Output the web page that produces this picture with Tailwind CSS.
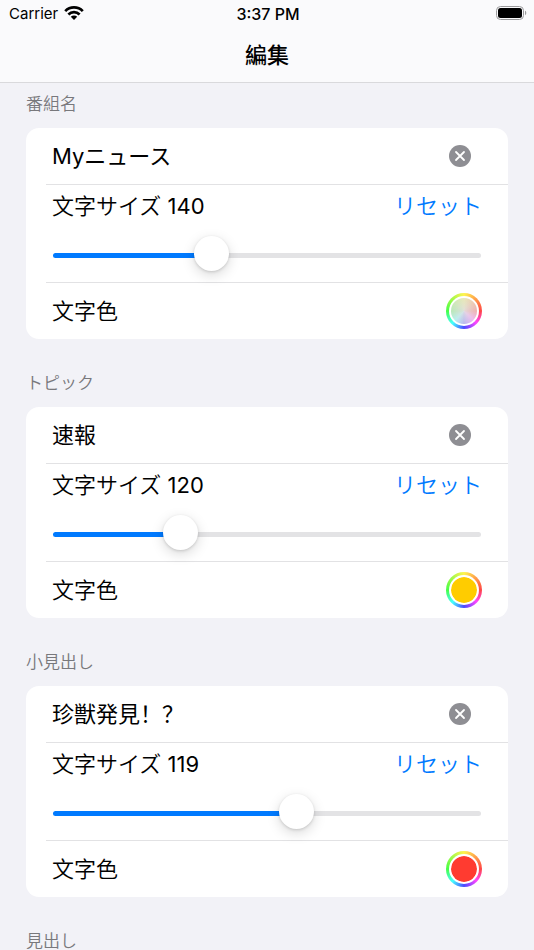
<!DOCTYPE html>
<html lang="en">
<head>
  <meta charset="UTF-8" />
  <meta name="viewport" content="width=device-width, initial-scale=1.0" />
  <title>編集</title>
  <script src="https://cdn.jsdelivr.net/npm/@tailwindcss/browser@4"></script>
</head>
<body class="bg-[#f2f2f7] min-h-screen text-black font-['Inter','Noto_Sans_CJK_SC',sans-serif]">
  <header class="bg-[#fafafc] border-b border-[#d9d9dc]">
    <div class="grid grid-cols-3 items-center h-7 pl-[9px] pr-[7px]">
      <div class="flex items-center gap-[6px] text-[15px] leading-5">
        <span>Carrier</span>
        <svg class="w-5 h-[14px] mb-[2px]" viewBox="0 0 20 14" fill="none" stroke="#000" stroke-width="2.7">
          <path d="M1.2 5.1a12.4 12.4 0 0 1 17.6 0" />
          <path d="M4.4 8.5a7.9 7.9 0 0 1 11.2 0" />
          <path d="M10 14 6.8 10.8a4.6 4.6 0 0 1 6.4 0Z" fill="#000" stroke="none" />
        </svg>
      </div>
      <div class="text-center text-base leading-5 font-medium">3:37 PM</div>
      <svg class="justify-self-end w-[31px] h-[14px] mb-[2px]" viewBox="0 0 31 14">
        <rect x="0.5" y="0.5" width="27" height="13" rx="4" fill="none" stroke="#9b9b9d" />
        <rect x="2" y="2" width="24" height="10" rx="2.5" fill="#000" />
        <path d="M29 4.8c1.7.6 1.7 3.8 0 4.4Z" fill="#9b9b9d" />
      </svg>
    </div>
    <h1 class="h-[54px] pt-[11px] text-center text-[22px] leading-8 font-medium">編集</h1>
  </header>

  <main id="sections" class="px-[26px] -mt-[23px]"></main>

  <script>
    const sections = [
      { id: "program", title: "番組名", text: "Myニュース", size: 140, max: 300, color: null },
      { id: "topic", title: "トピック", text: "速報", size: 120, max: 300, color: "#ffcc00" },
      { id: "subhead", title: "小見出し", text: "珍獣発見！？", size: 119, max: 170, color: "#ff3b30" },
      { id: "headline", title: "見出し" }
    ];
    const MIN_SIZE = 50;

    function fillPercent(size, max) {
      return (size - MIN_SIZE) / (max - MIN_SIZE) * 100 + "%";
    }

    // no colour picked yet: the well shows a pale colour wheel instead of a swatch
    function colorWell(s) {
      const look = s.color
        ? "[&::-webkit-color-swatch]:rounded-full"
        : "[&::-webkit-color-swatch]:opacity-0 bg-[radial-gradient(#e0e0e0e6,#e0e0e080_70%),conic-gradient(#f0f090,#ff8080_25%,#ff90ff_37%,#9090ff_50%,#90ffff_62%,#90f090_75%,#f0f090)]";
      return `
        <span class="size-9 p-[3px] rounded-full bg-[conic-gradient(#fff44f,#ff4545_25%,#ff45ff_37%,#4a4aff_50%,#45ffff_62%,#45ff45_75%,#fff44f)]">
          <span class="block p-[2px] rounded-full bg-white">
            <input id="${s.id}-color" type="color" value="${s.color || "#ffffff"}"
              class="block appearance-none size-[26px] p-0 border-0 rounded-full overflow-hidden [&::-webkit-color-swatch-wrapper]:p-0 [&::-webkit-color-swatch]:border-0 ${look}" />
          </span>
        </span>`;
    }

    function card(s) {
      return `
        <div class="bg-white rounded-[13px] text-[22px] leading-[30px] font-[350]">
          <div class="flex items-center h-14 pl-[26px] pr-[37px]">
            <input id="${s.id}-text" type="text" value="${s.text}" aria-label="${s.title}" class="flex-1 min-w-0 font-normal outline-none" />
            <button type="button" aria-label="消去" onclick="clearText('${s.id}')">
              <svg class="block size-[22px]" viewBox="0 0 22 22">
                <circle cx="11" cy="11" r="11" fill="#8e8e93" />
                <path d="m7 7 8 8M15 7l-8 8" stroke="#fff" stroke-width="1.8" stroke-linecap="round" />
              </svg>
            </button>
          </div>
          <hr class="ml-5 border-[#e2e2e4]" />
          <div class="px-[26px] pt-[6px] pb-[9px]">
            <div class="flex justify-between">
              <label for="${s.id}-size">文字サイズ <span id="${s.id}-value" class="font-normal">${s.size}</span></label>
              <button type="button" class="text-[#007aff]" onclick="setSize('${s.id}', ${s.size})">リセット</button>
            </div>
            <div class="px-px pt-[17px]">
              <input id="${s.id}-size" type="range" min="${MIN_SIZE}" max="${s.max}" value="${s.size}"
                oninput="setSize('${s.id}', this.value)" style="--fill: ${fillPercent(s.size, s.max)}"
                class="block appearance-none w-full h-[35px] bg-transparent [&::-webkit-slider-runnable-track]:h-[5px] [&::-webkit-slider-runnable-track]:rounded-full [&::-webkit-slider-runnable-track]:bg-[linear-gradient(to_right,#007aff_var(--fill),#e3e3e5_var(--fill))] [&::-webkit-slider-thumb]:appearance-none [&::-webkit-slider-thumb]:size-[35px] [&::-webkit-slider-thumb]:-mt-[17px] [&::-webkit-slider-thumb]:rounded-full [&::-webkit-slider-thumb]:bg-white [&::-webkit-slider-thumb]:shadow-[0_4px_13px_#00000026,0_1px_3px_#00000026]" />
            </div>
          </div>
          <hr class="ml-5 border-[#e2e2e4]" />
          <div class="flex items-center justify-between h-14 px-[26px]">
            <label for="${s.id}-color">文字色</label>
            ${colorWell(s)}
          </div>
        </div>`;
    }

    function setSize(id, size) {
      const slider = document.getElementById(id + "-size");
      slider.value = size;
      slider.style.setProperty("--fill", fillPercent(size, slider.max));
      document.getElementById(id + "-value").textContent = size;
    }

    function clearText(id) {
      const field = document.getElementById(id + "-text");
      field.value = "";
      field.focus();
    }

    document.getElementById("sections").innerHTML = sections.map(s => `
      <section>
        <h2 class="pt-[35px] pb-[15px] text-[17px] leading-[18px] font-[350] text-[#78787c]">${s.title}</h2>
        ${s.text ? card(s) : ""}
      </section>
    `).join("");
  </script>
</body>
</html>
